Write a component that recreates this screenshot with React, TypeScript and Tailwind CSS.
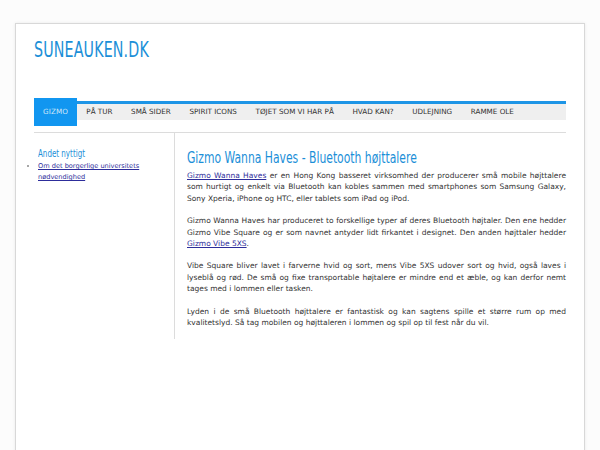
const menu = [
  'GIZMO',
  'PÅ TUR',
  'SMÅ SIDER',
  'SPIRIT ICONS',
  'TØJET SOM VI HAR PÅ',
  'HVAD KAN?',
  'UDLEJNING',
  'RAMME OLE',
]

const sans = { fontFamily: '"DejaVu Sans", Verdana, sans-serif' }

export default function App() {
  return (
    <div className="min-h-[450px] bg-[#fcfcfc] pt-[23px] pl-[15px] pr-[15px] overflow-hidden" style={sans}>
      <div className="border border-[#d8d8d8] bg-white shadow-[0_0_3px_rgba(0,0,0,0.08)] px-[18px] h-[440px]">
        {/* header */}
        <div className="pt-[13px] h-[77px]">
          <span className="inline-block origin-left scale-x-[0.72] text-[22px] leading-[26px] text-[#1b8fd8] font-stretch-condensed tracking-[0.2px]">
            SUNEAUKEN.DK
          </span>
        </div>

        {/* nav */}
        <nav className="h-[19px] border-t-[3px] border-[#1e95e6] bg-[#efefef] flex items-start">
          {menu.map((item, i) =>
            i === 0 ? (
              <a
                key={item}
                className="-mt-[6px] h-[28px] w-[43px] flex items-center justify-center bg-[#1196f0] text-[7.2px] text-[#cfe6f8] tracking-[0.1px]"
              >
                {item}
              </a>
            ) : (
              <a key={item} className="h-[16px] px-[9.3px] flex items-center text-[7.2px] text-[#333]">
                {item}
              </a>
            ),
          )}
        </nav>

        <div className="mt-[12px] border-t border-[#dcdcdc] flex">
          {/* sidebar */}
          <aside className="w-[141px] shrink-0 border-r border-[#dcdcdc] pl-[4px] pt-[14px]">
            <h3 className="block origin-left scale-x-[0.72] text-[11px] leading-[13px] text-[#1b8fd8] font-stretch-condensed whitespace-nowrap">
              Andet nyttigt
            </h3>
            <ul className="list-disc list-outside pl-0 ml-0 mt-[1px] text-[6.6px] leading-[11px] text-[#8a8a8a]">
              <li>
                <a className="text-[#2d2d9b] underline">
                  Om det borgerlige universitets
                  <br />
                  nødvendighed
                </a>
              </li>
            </ul>
          </aside>

          {/* main */}
          <main className="flex-1 pl-[12px] pt-[17px] pb-[11px] text-[7.5px] leading-[11.4px] text-[#333] text-justify">
            <h1 className="block origin-left scale-x-[0.75] whitespace-nowrap text-[16px] leading-[16px] text-[#1b8fd8] font-stretch-condensed mb-[4px]">
              Gizmo Wanna Haves - Bluetooth højttalere
            </h1>
            <p className="mb-[11px]">
              <a className="text-[#2d2d9b] underline">Gizmo Wanna Haves</a> er en Hong Kong basseret
              virksomhed der producerer små mobile højttalere som hurtigt og enkelt via Bluetooth kan
              kobles sammen med smartphones som Samsung Galaxy, Sony Xperia, iPhone og HTC, eller
              tablets som iPad og iPod.
            </p>
            <p className="mb-[11px]">
              Gizmo Wanna Haves har produceret to forskellige typer af deres Bluetooth højtaler. Den
              ene hedder Gizmo Vibe Square og er som navnet antyder lidt firkantet i designet. Den
              anden højttaler hedder <a className="text-[#2d2d9b] underline">Gizmo Vibe 5XS</a>.
            </p>
            <p className="mb-[11px]">
              Vibe Square bliver lavet i farverne hvid og sort, mens Vibe 5XS udover sort og hvid,
              også laves i lyseblå og rød. De små og fixe transportable højtalere er mindre end et
              æble, og kan derfor nemt tages med i lommen eller tasken.
            </p>
            <p>
              Lyden i de små Bluetooth højttalere er fantastisk og kan sagtens spille et større rum
              op med kvalitetslyd. Så tag mobilen og højttaleren i lommen og spil op til fest når du
              vil.
            </p>
          </main>
        </div>
      </div>
    </div>
  )
}
